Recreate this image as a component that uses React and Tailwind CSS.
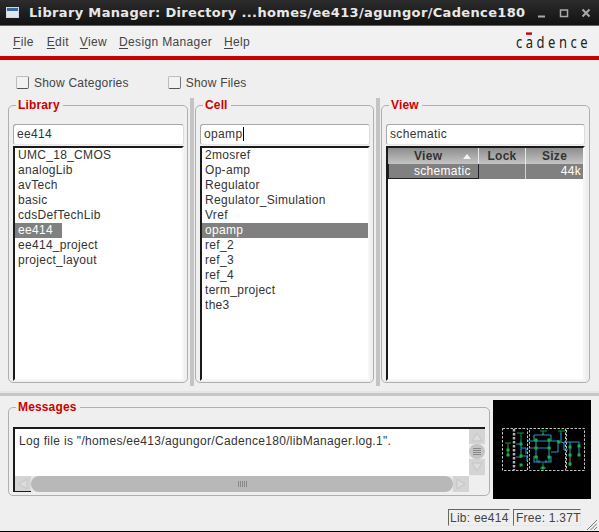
import React from "react";

const ui = { fontFamily: '"Liberation Sans", Arial, sans-serif' };

function Legend({ children }) {
  return (
    <span className="absolute left-[7px] top-[-8px] bg-[#efefef] pl-[2px] pr-[3px] text-[12px] leading-[15px] font-bold tracking-[0.15px] text-[#cc0000]">
      {children}
    </span>
  );
}

function Panel({ title, className, children }) {
  return (
    <div className={"relative rounded-[5px] border border-[#b0b0b0] " + className}>
      <Legend>{title}</Legend>
      {children}
    </div>
  );
}

function Field({ value, caret }) {
  return (
    <div className="h-[21px] shrink-0 rounded-[3px] border border-[#a8a8a8] border-b-[#e8e8e8] border-r-[#dcdcdc] bg-white pl-[3px] text-[12px] leading-[19px] tracking-[0.35px] text-[#333]">
      {value}
      {caret && <span className="ml-px inline-block h-[14px] w-px bg-black align-[-3px]" />}
    </div>
  );
}

function List({ items, selected, selectedClass }) {
  return (
    <div className="mt-px flex-1 border-2 border-[#1a1a1a] border-r-[#f6f6f6] border-b-[#f6f6f6] bg-white">
      {items.map((t) => (
        <div
          key={t}
          className={
            "h-[15px] pl-[3px] text-[12px] leading-[15px] tracking-[0.3px] " +
            (t === selected ? selectedClass + " bg-[#808080] text-white" : "text-[#333]")
          }
        >
          {t}
        </div>
      ))}
    </div>
  );
}

function Check({ label, className = "" }) {
  return (
    <div className={"flex items-center " + className}>
      <span className="h-[13px] w-[13px] rounded-[2px] border border-[#bdbdbd] border-b-[#555] border-r-[#777] bg-[#f2f2f2]" />
      <span className="ml-[5px] text-[12px] tracking-[0.22px] text-[#444]">{label}</span>
    </div>
  );
}

function Underlined({ k, rest }) {
  return (
    <span>
      <span className="underline underline-offset-2">{k}</span>
      {rest}
    </span>
  );
}

function ScrollTriangle({ d }) {
  return (
    <svg viewBox="0 0 14 14" className="h-[14px] w-[14px]">
      <path d={d} fill="#dcdcdc" stroke="#c4c4c4" />
    </svg>
  );
}

function Schematic() {
  const blue = "#2a8fc9";
  const green = "#10b83a";
  const nodes = [
    [28, 44], [28, 56], [28, 65], [15, 50], [15, 55], [50, 68],
    [43, 40], [56, 40], [43, 48], [56, 48], [43, 57], [56, 57],
    [66, 42], [77, 47], [77, 55], [77, 64], [86, 46], [86, 55],
  ];
  return (
    <svg viewBox="0 0 98 99" className="h-[99px] w-[98px] shrink-0 bg-black">
      <g fill="none" stroke="#c4c4c4" strokeDasharray="2.5 1.5">
        <rect x="9.5" y="28.5" width="25" height="42" />
        <rect x="36.5" y="28.5" width="36" height="42" />
        <rect x="73.5" y="28.5" width="18" height="42" />
      </g>
      <path d="M21 29v41" stroke="#b0b0b0" strokeWidth="2.5" strokeDasharray="2.5 1.5" fill="none" />
      <g fill="none" stroke={blue} strokeWidth="1.1">
        <path d="M23 44h5M23 57h5M28 40v17M28 48l5 0M28 56h6v5M33 48v6" />
        <path d="M50 33v2M41 35h17M41 35v6M58 35v6M35 41h25M37 48h21M43 40v18M56 40v18M41 62h3v-6M41 56v6h4M58 62h-2v-6M58 56v6h-3M44 62h11M46 60v3M53 60v3M58 52h7M65 40v12M60 41h6" />
        <path d="M68 33v9M68 42l3 1v7M71 50h4M71 42h15M77 42v24M86 42v14" />
      </g>
      <g fill="none" stroke="#0a9a40" strokeWidth="1">
        <path d="M12 43h6M15 43v13M24 33h7M28 33v7M47 31h7M50 31v4M65 31h7M68 31v3M50 63v5M47 68h6" />
      </g>
      <path d="M15 46v8M77 57v5" stroke="#a02020" fill="none" />
      <g fill={green}>
        {nodes.map(([x, y], i) => (
          <rect key={i} x={x - 1.5} y={y - 1.5} width="3" height="3" />
        ))}
      </g>
    </svg>
  );
}

export default function App() {
  return (
    <div style={ui} className="flex h-[532px] w-[599px] flex-col overflow-hidden bg-[#efefef]">
      {/* Title bar */}
      <div
        className="flex h-[26px] shrink-0 items-center border-b border-[#5a626c] bg-gradient-to-b from-[#2c2c2c] to-[#121212] pl-[6px] text-[#e8e8e8]"
        style={{ fontFamily: '"DejaVu Sans", sans-serif' }}
      >
        <span className="flex h-[11px] w-[13px] shrink-0 flex-col border border-[#cfd8e0] bg-[#dfe6ee]">
          <span className="h-[3px] bg-[#3a6a9c]" />
        </span>
        <span className="ml-[10px] text-[13px] font-bold tracking-[0.34px] whitespace-nowrap">
          Library Manager: Directory ...homes/ee413/agungor/Cadence180
        </span>
        <div className="ml-auto flex items-center gap-[12px] pr-[8px]">
          <svg viewBox="0 0 10 10" className="h-[10px] w-[10px]"><path d="M1 8.5h7" stroke="#aaa" strokeWidth="2" /></svg>
          <svg viewBox="0 0 10 10" className="h-[10px] w-[10px]"><rect x="1.5" y="2" width="7" height="6.5" fill="none" stroke="#aaa" strokeWidth="1.5" /></svg>
          <svg viewBox="0 0 10 10" className="h-[10px] w-[10px]"><path d="M1.5 1.5l7 7M8.5 1.5l-7 7" stroke="#aaa" strokeWidth="2" /></svg>
        </div>
      </div>

      {/* Menu bar */}
      <div className="flex h-[30px] shrink-0 items-center bg-[#f1f1f1] pl-[13px] pr-[8px] pt-[2px] text-[12px] tracking-[0.35px] text-[#444]">
        <Underlined k="F" rest="ile" />
        <span className="ml-[13px]"><Underlined k="E" rest="dit" /></span>
        <span className="ml-[11px]"><Underlined k="V" rest="iew" /></span>
        <span className="ml-[12px]"><Underlined k="D" rest="esign Manager" /></span>
        <span className="ml-[12px]"><Underlined k="H" rest="elp" /></span>
        <span
          className="relative ml-auto text-[13px] leading-[14px] tracking-[3.5px] text-[#222] [transform:scaleY(1.2)]"
          style={{ fontFamily: '"Noto Sans", sans-serif' }}
        >
          cadence
          <span className="absolute left-[10px] top-[-1px] h-[2px] w-[6px] bg-[#cc0000]" />
        </span>
      </div>
      <div className="h-[4px] shrink-0 bg-[#cc0000]" />

      {/* Toolbar */}
      <div className="flex h-[38px] shrink-0 items-center pl-[16px] pt-[7px]">
        <Check label="Show Categories" />
        <Check label="Show Files" className="ml-[39px]" />
      </div>

      {/* Panes */}
      <div className="flex h-[288px] shrink-0 pl-[8px] pr-[9px]">
        <div className="flex w-[180px] flex-col pb-[3px] pt-[7px]">
          <Panel title="Library" className="flex flex-1 flex-col pl-[4px] pr-[3px] pb-[1px] pt-[18px]">
            <Field value="ee414" />
            <List
              selected="ee414"
              selectedClass="w-[47px]"
              items={["UMC_18_CMOS", "analogLib", "avTech", "basic", "cdsDefTechLib", "ee414", "ee414_project", "project_layout"]}
            />
          </Panel>
        </div>
        <div className="w-[7px] pl-[2px]"><div className="h-full w-[4px] bg-[#c4c4c4]" /></div>
        <div className="flex w-[179px] flex-col pb-[3px] pt-[7px]">
          <Panel title="Cell" className="flex flex-1 flex-col pl-[4px] pr-[3px] pb-[1px] pt-[18px]">
            <Field value="opamp" caret />
            <List
              selected="opamp"
              selectedClass="w-full"
              items={["2mosref", "Op-amp", "Regulator", "Regulator_Simulation", "Vref", "opamp", "ref_2", "ref_3", "ref_4", "term_project", "the3"]}
            />
          </Panel>
        </div>
        <div className="w-[7px] pl-[2px]"><div className="h-full w-[4px] bg-[#c4c4c4]" /></div>
        <div className="flex flex-1 flex-col pb-[3px] pt-[7px]">
          <Panel title="View" className="flex flex-1 flex-col px-[4px] pb-[1px] pt-[18px]">
            <Field value="schematic" />
            <div className="mt-px flex-1 border-2 border-[#1a1a1a] border-r-[#f6f6f6] border-b-[#f6f6f6] bg-white text-[12px] tracking-[0.3px]">
              <div className="flex h-[16px] bg-gradient-to-b from-[#8e8e8e] to-[#c4c4c4] font-bold leading-[16px] text-[#333]">
                <div className="relative w-[91px] border-r border-[#e8e8e8] pl-[26px]">
                  View
                  <svg viewBox="0 0 8 5" className="absolute right-[7px] top-[6px] h-[5px] w-[8px]"><path d="M0 5L4 0l4 5z" fill="#f4f4f4" /></svg>
                </div>
                <div className="w-[47px] border-r border-[#e8e8e8] text-center">Lock</div>
                <div className="flex-1 text-center">Size</div>
              </div>
              <div className="flex h-[15px] bg-[#808080] leading-[14px] text-white">
                <div className="w-[91px] border border-t-0 border-[#222] pl-[25px]">schematic</div>
                <div className="w-[47px] border-r border-[#d0d0d0]" />
                <div className="flex-1 pr-[2px] text-right">44k</div>
              </div>
            </div>
          </Panel>
        </div>
      </div>

      {/* Horizontal sash */}
      <div className="mt-[5px] h-[5px] shrink-0 bg-gradient-to-b from-[#e4e4e4] from-40% to-[#c6c6c6] to-40%" />

      {/* Bottom */}
      <div className="flex h-[113px] shrink-0 pl-[8px] pt-[4px]">
        <div className="w-[482px] pt-[7px]">
          <Panel title="Messages" className="h-[89px] pl-[4px] pr-[4px] pt-[19px]">
            <div className="flex h-[65px] flex-col">
              <div className="flex flex-1">
                <div className="flex-1 border-l-2 border-t-2 border-[#1a1a1a] bg-white pl-[4px] pt-[5px] text-[12px] leading-[15px] tracking-[0.32px] whitespace-nowrap text-[#333]">
                  Log file is "/homes/ee413/agungor/Cadence180/libManager.log.1".
                </div>
                <div className="flex w-[16px] flex-col border-t-2 border-[#1a1a1a] bg-[#ececec]">
                  <div className="flex h-[15px] items-center justify-center bg-[#d4d4d4]"><ScrollTriangle d="M2 11L7 3l5 8z" /></div>
                  <div className="flex h-[15px] flex-col items-center justify-center gap-px rounded-full bg-[#c4c4c4]">
                    <span className="h-px w-[8px] bg-[#888]" />
                    <span className="h-px w-[8px] bg-[#888]" />
                    <span className="h-px w-[8px] bg-[#888]" />
                    <span className="h-px w-[8px] bg-[#888]" />
                  </div>
                  <div className="flex h-[16px] items-center justify-center bg-[#d4d4d4]"><ScrollTriangle d="M2 3l5 8 5-8z" /></div>
                </div>
              </div>
              <div className="flex h-[16px] bg-[#e8e8e8]">
                <div className="flex w-[18px] items-center justify-center border-l-2 border-b border-[#1a1a1a] bg-[#d4d4d4]"><ScrollTriangle d="M11 2L3 7l8 5z" /></div>
                <div className="flex flex-1 items-center justify-center gap-px rounded-full bg-[#b8b8b8]">
                  <span className="h-[6px] w-px bg-[#888]" />
                  <span className="h-[6px] w-px bg-[#888]" />
                  <span className="h-[6px] w-px bg-[#888]" />
                  <span className="h-[6px] w-px bg-[#888]" />
                  <span className="h-[6px] w-px bg-[#888]" />
                </div>
                <div className="flex w-[16px] items-center justify-center bg-[#d4d4d4]"><ScrollTriangle d="M3 2l8 5-8 5z" /></div>
                <div className="w-[16px] bg-[#efefef]" />
              </div>
            </div>
          </Panel>
        </div>
        <div className="ml-[3px]"><Schematic /></div>
      </div>

      {/* Status bar */}
      <div className="flex h-[22px] shrink-0 justify-end pr-[2px] text-[12px] leading-[16px] tracking-[0.25px] whitespace-nowrap text-[#444]">
        <div className="mr-[3px] h-[17px] w-[62px] border border-[#666] border-r-[#e8e8e8] border-b-[#e8e8e8] pl-[1px]">Lib: ee414</div>
        <div className="h-[17px] w-[68px] border border-[#666] border-r-[#e8e8e8] border-b-[#e8e8e8] pl-[2px]">Free: 1.37T</div>
        <svg viewBox="0 0 10 10" className="ml-[6px] mt-[11px] h-[10px] w-[10px]">
          <path d="M0 10L10 0M3.5 10L10 3.5M7 10L10 7" stroke="#777" fill="none" />
        </svg>
      </div>
      <div className="h-[1px] shrink-0 bg-black" />
    </div>
  );
}
